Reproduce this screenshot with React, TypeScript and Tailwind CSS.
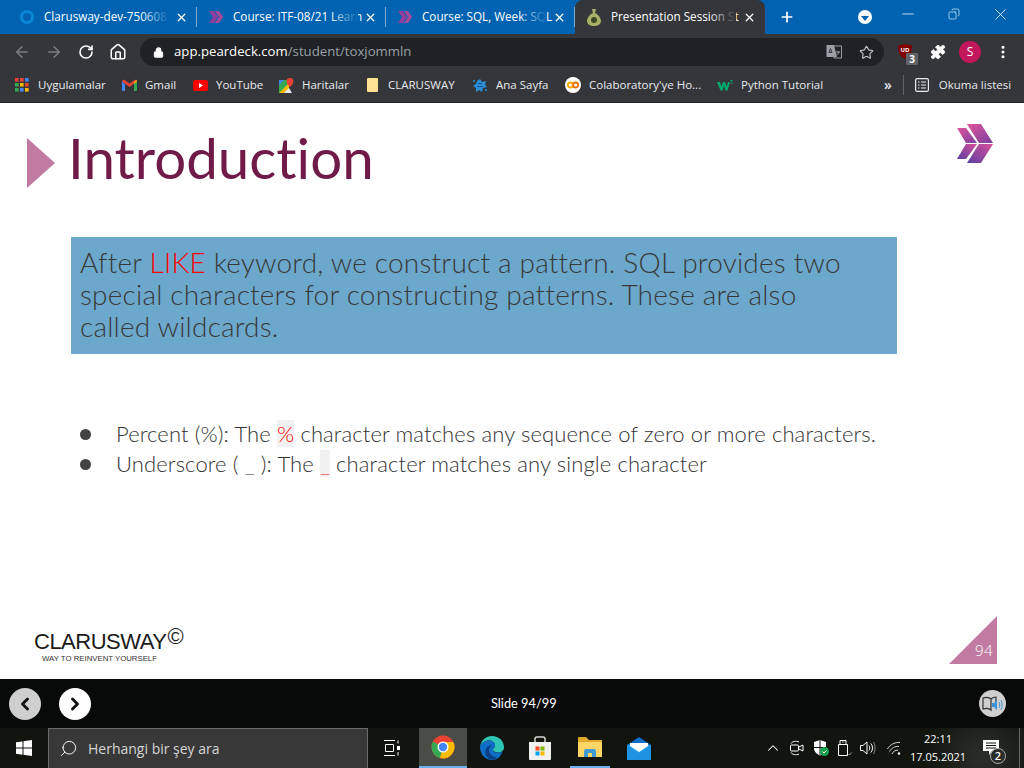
import { ChevronLeft, ChevronRight, ChevronUp, Lock, Minus, Plus, RotateCw, Star, X, Search, ArrowLeft, ArrowRight, Home, MoreVertical, Puzzle, Copy } from "lucide-react";

const ui = "font-['Open_Sans',sans-serif]";
const slide = "font-['Lato',sans-serif] font-light [font-variant-ligatures:none]";

const ChevronLogo = ({ size = 16 }: { size?: number }) => (
  <svg width={size} height={size} viewBox="0 0 16 16">
    <path d="M1 2h5l4 6-4 6H1l4-6z" fill="#8e3f9e" />
    <path d="M7 2h4l4 6-4 6H7l4-6z" fill="#a84a9a" />
  </svg>
);

const Tab = ({ title, icon, active }: { title: string; icon: React.ReactNode; active?: boolean }) => (
  <div
    className={`relative flex h-[34px] items-center pl-[11px] pr-[8px] ${
      active ? "w-[190px] rounded-t-lg bg-[#35363a]" : "w-[189px]"
    }`}
  >
    <div className="flex w-[16px] shrink-0 justify-center">{icon}</div>
    <div className={`relative ml-[9px] w-[125px] whitespace-nowrap text-[11.7px] text-white ${ui}`}>
      {title}
      <div
        className={`absolute inset-y-0 right-0 w-[28px] bg-gradient-to-r from-transparent ${
          active ? "to-[#35363a]" : "to-[#0063b1]"
        }`}
      />
    </div>
    <X size={13} strokeWidth={2.4} className="ml-auto mr-[1px] text-white" />
    {!active && <div className="absolute right-0 top-[7px] h-[20px] w-px bg-[#7fa8cc]" />}
  </div>
);

const Bookmark = ({ width, icon, label }: { width: number; icon: React.ReactNode; label: string }) => (
  <div className="flex shrink-0 items-center" style={{ width }}>
    <div className="flex w-[16px] shrink-0 justify-center">{icon}</div>
    <span className={`ml-[8px] whitespace-nowrap text-[11.5px] text-[#e8eaed] ${ui}`}>{label}</span>
  </div>
);

const AppsIcon = () => (
  <svg width="14" height="14" viewBox="0 0 14 14">
    {[
      [0, 0, "#ea4335"], [5, 0, "#ea4335"], [10, 0, "#4285f4"],
      [0, 5, "#34a853"], [5, 5, "#fbbc04"], [10, 5, "#ea4335"],
      [0, 10, "#34a853"], [5, 10, "#4285f4"], [10, 10, "#fbbc04"],
    ].map(([x, y, c], i) => (
      <rect key={i} x={x as number} y={y as number} width="3.6" height="3.6" fill={c as string} />
    ))}
  </svg>
);

const GmailIcon = () => (
  <svg width="15" height="12" viewBox="0 0 15 12">
    <path d="M0 2v9a1 1 0 0 0 1 1h2V5z" fill="#4285f4" />
    <path d="M15 2v9a1 1 0 0 1-1 1h-2V5z" fill="#34a853" />
    <path d="M0 2.2 1.8.4 7.5 4.6 13.2.4 15 2.2 7.5 8z" fill="#ea4335" />
    <path d="M12 5l3-2.8V1l-3 2z" fill="#fbbc04" />
  </svg>
);

const YouTubeIcon = () => (
  <svg width="15" height="11" viewBox="0 0 15 11">
    <rect width="15" height="11" rx="2.6" fill="#f00" />
    <path d="M6 3l4 2.5L6 8z" fill="#fff" />
  </svg>
);

const MapsIcon = () => (
  <svg width="15" height="15" viewBox="0 0 15 15">
    <path d="M0 2h10v13H0z" fill="#34a853" />
    <path d="M0 15 10 5v10z" fill="#fbbc04" />
    <path d="M0 2h5L0 7z" fill="#4285f4" />
    <path d="M5 15l5-5 3 5z" fill="#e8eaed" />
    <path d="M11 0a3.4 3.4 0 0 1 3.4 3.4C14.4 6 11 9 11 9S7.6 6 7.6 3.4A3.4 3.4 0 0 1 11 0z" fill="#ea4335" />
  </svg>
);

const NoteIcon = () => <div className="h-[14px] w-[11px] rounded-[1px] bg-[#fde293]" />;

const SplashIcon = () => (
  <svg width="16" height="15" viewBox="0 0 16 15">
    <g fill="#2a8fd8">
      <path d="M5 3l3-2 2 3 4-1-1 4 2 2-4 1-1 4-3-2-3 2 0-4-3-2 3-2z" />
      <circle cx="2" cy="3" r="1" />
      <circle cx="14" cy="12" r="1" />
    </g>
    <path d="M6 5h4v1H6zM5 8h6v1H5z" fill="#0d4d86" />
  </svg>
);

const ColabIcon = () => (
  <svg width="16" height="16" viewBox="0 0 16 16">
    <circle cx="8" cy="8" r="8" fill="#fff" />
    <circle cx="5.4" cy="8" r="2.5" fill="none" stroke="#f9ab00" strokeWidth="1.8" />
    <circle cx="10.6" cy="8" r="2.5" fill="none" stroke="#e8710a" strokeWidth="1.8" />
  </svg>
);

const W3Icon = () => (
  <svg width="16" height="11" viewBox="0 0 16 11">
    <path d="M0 2h3l1.400 4.500L6 2h2l1.400 4.500L11 2h2l-2.500 8.500h-2L7 6l-1.500 4.500h-2z" fill="#04aa6d" />
    <path d="M13 .5h2.500l-1.200 1.300c1 0 1.300.4 1.300.9 0 .8-1 1.100-2 .8" fill="none" stroke="#04aa6d" strokeWidth=".8" />
  </svg>
);

const ReadingIcon = () => (
  <svg width="14" height="14" viewBox="0 0 14 14" fill="none" stroke="#e8eaed" strokeWidth="1.200">
    <rect x=".6" y=".6" width="12.800" height="12.800" rx="1.500" />
    <path d="M3 4h1.500M6 4h5M3 7h1.500M6 7h5M3 10h1.500M6 10h5" />
  </svg>
);

const TranslateIcon = () => (
  <svg width="16" height="16" viewBox="0 0 16 16">
    <path d="M7 2h8.500v12H8z" fill="none" stroke="#9aa0a6" />
    <path d="M.5 1H8l3 12H.5z" fill="#9aa0a6" />
    <path d="M3 8.500h3M4.500 4.500 3 8.500M4.500 4.500 6 8.500" stroke="#35363a" fill="none" />
    <path d="M10 8h4M12 7v1M13 8c-.3 1.500-1.200 2.500-2.500 3" stroke="#9aa0a6" fill="none" />
  </svg>
);

const ChromeIcon = () => (
  <svg width="24" height="24" viewBox="0 0 24 24">
    <circle cx="12" cy="12" r="11.500" fill="#ea4335" />
    <path d="M12 12 1.900 6.500A11.500 11.500 0 0 0 9 23.100z" fill="#34a853" />
    <path d="M12 7h10.300A11.500 11.500 0 0 1 9 23.100L12 12z" fill="#fbbc04" />
    <circle cx="12" cy="12" r="5.500" fill="#fff" />
    <circle cx="12" cy="12" r="4.200" fill="#4285f4" />
  </svg>
);

const EdgeIcon = () => (
  <svg width="24" height="24" viewBox="0 0 24 24">
    <path d="M12 0c7 0 12 5 12 11.500 0 3.500-3 5-6 5-2 0-5-1-5-3 0-1.500 2-1.500 2-4 0-3-3-5-6-5-4 0-8 2.500-9 6C1 4.500 6 0 12 0z" fill="#30c6b5" />
    <path d="M0 11c.5-4 5-6.500 9-6.500s6 2 6 5c0 2.500-2 2.500-2 4 0 2 3 4 6 3 1 0 2.500-.5 3.500-1.500C21 21 17 24 12 24 5 24 0 18 0 11z" fill="#0f6fc6" />
    <path d="M8 22c-3-2-3-6-2-9 1-2.500 3-4 6-3.500-2 1-3 3-3 5 0 3 3 6 8 7.500-2 1.500-6 2.500-9 0z" fill="#0b3f86" />
  </svg>
);

const StoreIcon = () => (
  <svg width="24" height="24" viewBox="0 0 24 24">
    <path d="M7 6V3a2 2 0 0 1 2-2h6a2 2 0 0 1 2 2v3" fill="none" stroke="#d8d8d8" strokeWidth="1.500" />
    <path d="M1 6h22v17a1 1 0 0 1-1 1H2a1 1 0 0 1-1-1z" fill="#f1f1f1" />
    <rect x="7.500" y="10.500" width="4" height="4" fill="#f25022" />
    <rect x="12.500" y="10.500" width="4" height="4" fill="#7fba00" />
    <rect x="7.500" y="15.500" width="4" height="4" fill="#00a4ef" />
    <rect x="12.500" y="15.500" width="4" height="4" fill="#ffb900" />
  </svg>
);

const FolderIcon = () => (
  <svg width="24" height="20" viewBox="0 0 24 20">
    <path d="M0 1a1 1 0 0 1 1-1h7l3 3h13v16a1 1 0 0 1-1 1H1a1 1 0 0 1-1-1z" fill="#e0a92c" />
    <path d="M0 5h24v14a1 1 0 0 1-1 1H1a1 1 0 0 1-1-1z" fill="#fdd567" />
    <path d="M7 12h10l1 2v6h-4v-4h-4v4H6v-6z" fill="#3f9ad6" />
  </svg>
);

const MailIcon = () => (
  <svg width="24" height="23" viewBox="0 0 24 23">
    <path d="M0 8 12 0l12 8v1H0z" fill="#0f6fc6" />
    <path d="M0 8h24v15H0z" fill="#2aa6ee" />
    <path d="M3 6h18v3l-9 6-9-6z" fill="#fff" />
    <path d="M0 8l12 8 12-8v15H0z" fill="#1d93e2" />
  </svg>
);

const WindowsLogo = () => (
  <svg width="16" height="16" viewBox="0 0 16 16" fill="#fff">
    <path d="M0 2.300 6.500 1.400v6.200H0zM7.500 1.300 16 0v7.600H7.500zM0 8.500h6.500v6.200L0 13.800zM7.500 8.500H16V16l-8.500-1.200z" />
  </svg>
);

const TaskViewIcon = () => (
  <svg width="16" height="16" viewBox="0 0 16 16" fill="none" stroke="#fff" strokeWidth="1">
    <path d="M0 .5h11M0 15.500h11M1.500 4.500h8v7h-8z" />
    <path d="M14 .5v3M14 12v3.500" />
    <rect x="13" y="6" width="3" height="4" fill="#fff" stroke="none" />
  </svg>
);

const MeetIcon = () => (
  <svg width="14" height="16" viewBox="0 0 14 16" fill="none" stroke="#fff" strokeWidth="1">
    <path d="M1 3.500C2 1.500 6 .5 9 2M1 12.500c1 2 5 3 8 1.500" />
    <rect x=".5" y="5" width="8" height="6" rx="1" />
    <path d="M9 7l4-2v6l-4-2" />
  </svg>
);

const ShieldIcon = () => (
  <svg width="16" height="16" viewBox="0 0 16 16">
    <path d="M7 0l6 2v6c0 4-3 6-6 7.500C4 14 1 12 1 8V2z" fill="#fff" />
    <path d="M7 0v15.500M1 7.500h12" stroke="#0d110c" strokeWidth="1" />
    <circle cx="11.500" cy="11.500" r="4.500" fill="#16a34a" />
    <path d="M9.500 11.500l1.500 1.500 2.500-2.500" fill="none" stroke="#fff" />
  </svg>
);

const UsbIcon = () => (
  <svg width="14" height="16" viewBox="0 0 14 16" fill="none" stroke="#fff" strokeWidth="1">
    <path d="M2 .5h6v4H2zM.5 4.500h9v11h-9z" />
    <path d="M4 2h.8M5.500 2h.8" />
    <path d="M10.500 14l1 1 2-2.500" stroke="#9a9a9a" />
  </svg>
);

const VolumeIcon = () => (
  <svg width="16" height="16" viewBox="0 0 16 16" fill="none" stroke="#fff" strokeWidth="1">
    <path d="M.5 5.500h2.500L7 2v12l-4-3.500H.5z" />
    <path d="M9 5.500c1 1.500 1 3.500 0 5M11 3.500c2 2.500 2 6.500 0 9" />
    <path d="M13.500 2c2 3 2 9 0 12" stroke="#8a8a8a" />
  </svg>
);

const WifiIcon = () => (
  <svg width="14" height="14" viewBox="0 0 14 14" fill="none" stroke="#d8d8d8" strokeWidth="1">
    <path d="M.5 8C3 3.500 8 1 13 1.500M2.500 10.500C4.500 7 8 5 12 5.500M5 13c1-2.500 3.500-4 6-3.800" />
    <circle cx="12" cy="12.500" r="1.200" fill="#fff" stroke="none" />
  </svg>
);

export default function App() {
  return (
    <div className="flex h-[768px] w-[1024px] flex-col overflow-hidden bg-white">
      {/* tab strip */}
      <div className="flex h-[34px] shrink-0 items-end bg-[#0063b1] pl-[8px]">
        <Tab
          title="Clarusway-dev-750608"
          icon={<div className="h-[14px] w-[14px] rounded-full border-[3px] border-[#0a86d8]" />}
        />
        <Tab title="Course: ITF-08/21 Learn" icon={<ChevronLogo />} />
        <Tab title="Course: SQL, Week: SQL" icon={<ChevronLogo />} />
        <Tab
          active
          title="Presentation Session St"
          icon={
            <svg width="14" height="17" viewBox="0 0 14 17">
              <path d="M5 0h4L8 4c3 1 6 5 6 8 0 3-3 5-7 5s-7-2-7-5c0-3 3-7 6-8z" fill="#a9b06a" />
              <circle cx="7" cy="11" r="3" fill="#3f4a25" />
            </svg>
          }
        />
        <Plus size={16} strokeWidth={2.6} className="ml-[14px] mb-[9px] text-white" />
        <div className="mb-[10px] ml-[63px] flex h-[14px] w-[14px] items-center justify-center rounded-full bg-white">
          <div className="mt-[2px] h-0 w-0 border-x-[4px] border-t-[5px] border-x-transparent border-t-[#0063b1]" />
        </div>
        <div className="mb-[10px] ml-[27px] flex h-[20px] w-[111px] items-center justify-between text-white">
          <Minus size={18} strokeWidth={1} />
          <Copy size={12} strokeWidth={1.2} className="-scale-x-100" />
          <X size={19} strokeWidth={1} />
        </div>
      </div>

      {/* toolbar */}
      <div className="flex h-[34px] shrink-0 items-center bg-[#35363a] pl-[13px] pt-[2px]">
        <ArrowLeft size={18} strokeWidth={2} className="text-[#7d7f84]" />
        <ArrowRight size={18} strokeWidth={2} className="ml-[14px] text-[#7d7f84]" />
        <RotateCw size={16} strokeWidth={2.4} className="ml-[15px] text-white" />
        <Home size={18} strokeWidth={2} className="ml-[15px] text-white" />
        <div className="ml-[13px] flex h-[28px] w-[744px] items-center rounded-full bg-[#202124] pl-[13px] pr-[10px]">
          <Lock size={11} fill="#fff" strokeWidth={2.4} className="text-white" />
          <span className={`ml-[10px] text-[13.2px] text-white ${ui}`}>
            app.peardeck.com<span className="text-[#9aa0a6]">/student/toxjommln</span>
          </span>
          <div className="ml-auto flex items-center gap-[17px]">
            <TranslateIcon />
            <Star size={15} strokeWidth={1.8} className="text-[#c5c7ca]" />
          </div>
        </div>
        <div className="relative ml-[14px] h-[16px] w-[16px]">
          <svg width="14" height="15" viewBox="0 0 14 15">
            <path d="M7 0l7 1.500c0 7-2 11-7 13.500C2 12.500 0 8.500 0 1.500z" fill="#800000" />
            <text x="7" y="8" textAnchor="middle" fontSize="6" fontWeight="700" fill="#fff" fontFamily="Open Sans">
              UD
            </text>
          </svg>
          <div className={`absolute left-[8px] top-[9px] flex h-[12px] w-[12px] items-center justify-center rounded-[1px] bg-[#5f6368] text-[10px] font-bold text-white ${ui}`}>
            3
          </div>
        </div>
        <Puzzle size={16} fill="#fff" strokeWidth={1} className="ml-[16px] text-white" />
        <div className={`ml-[13px] flex h-[22px] w-[22px] items-center justify-center rounded-full bg-[#c2185b] text-[12px] text-white ${ui}`}>
          S
        </div>
        <MoreVertical size={16} strokeWidth={2.6} className="ml-[14px] text-white" />
      </div>

      {/* bookmarks bar */}
      <div className="flex h-[35px] shrink-0 items-center border-b border-[#202124] bg-[#35363a] pl-[14px]">
        <Bookmark width={107} icon={<AppsIcon />} label="Uygulamalar" />
        <Bookmark width={71} icon={<GmailIcon />} label="Gmail" />
        <Bookmark width={86} icon={<YouTubeIcon />} label="YouTube" />
        <Bookmark width={86} icon={<MapsIcon />} label="Haritalar" />
        <Bookmark width={108} icon={<NoteIcon />} label="CLARUSWAY" />
        <Bookmark width={93} icon={<SplashIcon />} label="Ana Sayfa" />
        <Bookmark width={152} icon={<ColabIcon />} label="Colaboratory'ye Ho..." />
        <Bookmark width={167} icon={<W3Icon />} label="Python Tutorial" />
        <span className={`text-[14px] font-semibold leading-none text-[#e8eaed] ${ui}`}>»</span>
        <div className="ml-[11px] h-[20px] w-px bg-[#5f6368]" />
        <div className="ml-[11px] flex items-center">
          <ReadingIcon />
          <span className={`ml-[10px] whitespace-nowrap text-[11.5px] text-[#e8eaed] ${ui}`}>Okuma listesi</span>
        </div>
      </div>

      {/* slide */}
      <div className="relative flex min-h-0 flex-1 flex-col bg-white">
        <div className="flex items-center pl-[27px] pt-[26px]">
          <div className="mt-[9px] h-0 w-0 border-y-[25px] border-l-[28px] border-y-transparent border-l-[#c17ba3]" />
          <h1 className={`-mt-[4px] ml-[13px] text-[56.500px] leading-[60px] text-[#701a47] ${slide} font-normal`}>Introduction</h1>
          <svg width="37" height="40" viewBox="0 0 37 40" className="ml-auto mr-[30px] -mt-[30px]">
            <defs>
              <linearGradient id="logoUp" x1="0" y1="0" x2="1" y2="1">
                <stop offset="0" stopColor="#e0559a" />
                <stop offset="1" stopColor="#7a3fa0" />
              </linearGradient>
              <linearGradient id="logoDown" x1="0" y1="1" x2="1" y2="0">
                <stop offset="0" stopColor="#5b3f9f" />
                <stop offset="1" stopColor="#d84f9c" />
              </linearGradient>
            </defs>
            <path d="M0 4h9l11 15H9z" fill="url(#logoUp)" />
            <path d="M9 20h11L9 35H0z" fill="url(#logoDown)" />
            <path d="M10 0h14l12 19H22z" fill="url(#logoUp)" />
            <path d="M22 20h14L24 39H10z" fill="url(#logoDown)" />
          </svg>
        </div>

        <div className={`ml-[71px] mt-[49px] w-[826px] bg-[#6ca8cc] pb-[12px] pl-[9px] pt-[9px] text-[28px] leading-[32px] tracking-[0.2px] text-[#383838] ${slide}`}>
          After <span className="text-[#ff0000]">LIKE</span> keyword, we construct a pattern. SQL provides two
          <br />
          special characters for constructing patterns. These are also
          <br />
          called wildcards.
        </div>

        <ul className={`ml-[80px] mt-[65px] text-[22px] leading-[30px] tracking-[0.12px] text-[#333] ${slide}`}>
          <li className="flex items-center">
            <span className="mr-[25px] h-[11px] w-[11px] rounded-full bg-[#434343]" />
            <span>
              Percent (%): The <span className="bg-[#f1f1f1] text-[#ff0000]">%</span> character matches any sequence of zero or more characters.
            </span>
          </li>
          <li className="flex items-center">
            <span className="mr-[25px] h-[11px] w-[11px] rounded-full bg-[#434343]" />
            <span>
              Underscore ( _ ): The <span className="bg-[#f1f1f1] text-[#ff0000]">_</span> character matches any single character
            </span>
          </li>
        </ul>

        <div className="mt-auto flex items-end justify-between pb-[15px] pl-[34px] pr-[27px]">
          <div className="flex flex-col font-['Liberation_Sans',sans-serif]">
            <div className="flex items-start text-[#1a1a1a]">
              <span className="text-[22px] leading-[22px] tracking-[-0.5px]">CLARUSWAY</span>
              <span className="-mt-[4px] ml-px text-[22px] font-light leading-[20px]">©</span>
            </div>
            <span className="ml-[8px] text-[7.800px] leading-[11px] text-[#333]">WAY TO REINVENT YOURSELF</span>
          </div>
          <div className="relative h-[48px] w-[48px]">
            <div className="h-full w-full bg-[#c17ba3] [clip-path:polygon(100%_0,100%_100%,0_100%)]" />
            <span className={`absolute bottom-[5px] right-[4px] text-[15px] leading-[18px] tracking-[0.5px] text-white ${ui} font-light`}>94</span>
          </div>
        </div>
      </div>

      {/* deck controls */}
      <div className="flex h-[49px] shrink-0 items-center bg-[#080a0a] pl-[9px] pr-[18px]">
        <div className="flex h-[32px] w-[32px] items-center justify-center rounded-full bg-[#cfcfcf]">
          <ChevronLeft size={20} strokeWidth={3.4} className="text-[#111]" />
        </div>
        <div className="ml-[18px] flex h-[32px] w-[32px] items-center justify-center rounded-full bg-white">
          <ChevronRight size={20} strokeWidth={3.4} className="text-[#111]" />
        </div>
        <span className="ml-[400px] font-['Lato',sans-serif] text-[12.800px] text-white">Slide 94/99</span>
        <div className="ml-auto flex h-[27px] w-[27px] items-center justify-center rounded-full bg-[#cfcfcf]">
          <svg width="21" height="16" viewBox="0 0 21 16" fill="none">
            <path d="M1 2c3-1 6-1 8 1v11c-2-2-5-2-8-1zM9 3c2-2 4-2 5-2v5" stroke="#333" strokeWidth="1.200" />
            <path d="M10 7h2l3-3v10l-3-3h-2z" fill="#3c93d8" />
            <path d="M17 6c1 2 1 4 0 6M19 4c1.500 3 1.500 7 0 10" stroke="#3c93d8" />
          </svg>
        </div>
      </div>

      {/* windows taskbar */}
      <div className="flex h-[40px] shrink-0 items-center bg-[#11150e] bg-[radial-gradient(circle_at_96%_70%,#2c2e2a,transparent_60px)] text-white">
        <div className="ml-[16px] w-[16px]">
          <WindowsLogo />
        </div>
        <div className="ml-[16px] flex h-[40px] w-[320px] items-center border border-b-0 border-[#6a6a6a] bg-[#383838] pl-[10px]">
          <Search size={19} strokeWidth={1.2} className="-scale-x-100 text-white" />
          <span className={`ml-[10px] text-[14px] text-[#d5d5d5] ${ui}`}>Herhangi bir şey ara</span>
        </div>
        <div className="ml-[16px] w-[16px]">
          <TaskViewIcon />
        </div>
        <div className="ml-[19px] flex h-[40px] w-[48px] items-center justify-center border-b-[2px] border-[#6db0ef] bg-[#4a4d45]">
          <ChromeIcon />
        </div>
        <div className="flex h-[40px] w-[50px] items-center justify-center">
          <EdgeIcon />
        </div>
        <div className="flex h-[40px] w-[46px] items-center justify-center">
          <StoreIcon />
        </div>
        <div className="ml-[7px] flex h-[40px] w-[40px] items-center justify-center border-b-[2px] border-[#6db0ef]">
          <FolderIcon />
        </div>
        <div className="flex h-[40px] w-[58px] items-center justify-center">
          <MailIcon />
        </div>
        <ChevronUp size={18} strokeWidth={1.4} className="ml-[96px] text-white" />
        <div className="ml-[8px]">
          <MeetIcon />
        </div>
        <div className="ml-[9px]">
          <ShieldIcon />
        </div>
        <div className="ml-[9px]">
          <UsbIcon />
        </div>
        <div className="ml-[8px]">
          <VolumeIcon />
        </div>
        <div className="ml-[11px]">
          <WifiIcon />
        </div>
        <div className={`ml-[8px] flex w-[58px] flex-col items-center text-[11px] leading-[18px] text-white ${ui}`}>
          <span>22:11</span>
          <span>17.05.2021</span>
        </div>
        <div className="relative ml-[16px] mt-[4px] h-[20px] w-[18px]">
          <svg width="16" height="15" viewBox="0 0 16 15" fill="#fff">
            <path d="M0 0h16v11H9l-3 4v-4H0z" />
            <path d="M3 3h10M3 5.500h10M3 8h10" stroke="#11150e" />
          </svg>
          <div className={`absolute left-[7px] top-[8px] flex h-[16px] w-[16px] items-center justify-center rounded-full border border-[#aaa] bg-[#2a2c28] text-[11px] font-semibold text-white ${ui}`}>
            2
          </div>
        </div>
        <div className="ml-auto mr-[4px] h-[40px] w-px bg-[#666]" />
      </div>
    </div>
  );
}
